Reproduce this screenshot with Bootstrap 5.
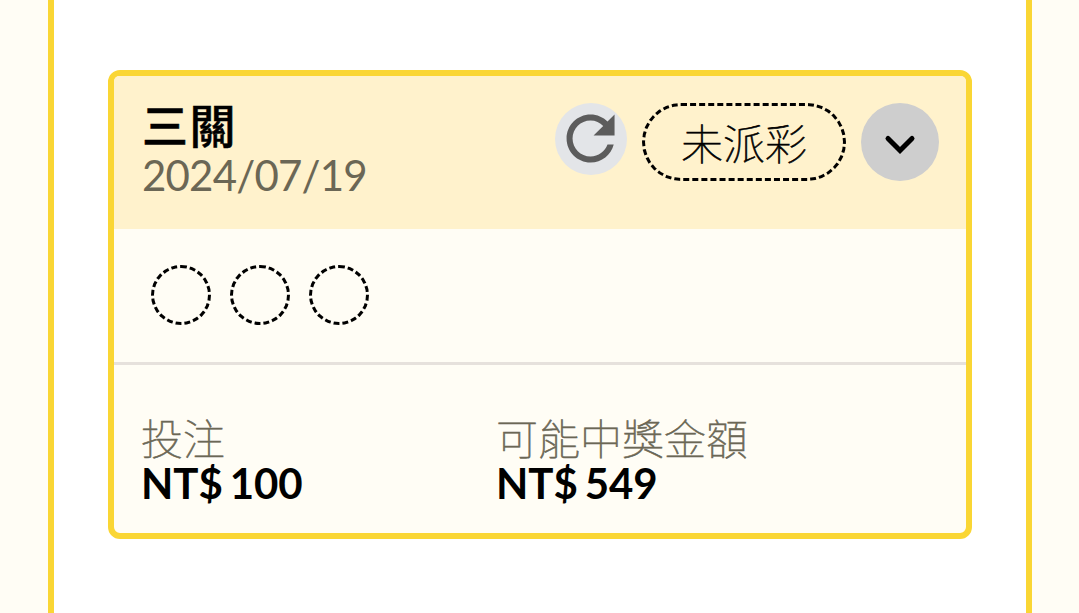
<!DOCTYPE html>
<html lang="zh-Hant">
<head>
  <meta charset="UTF-8">
  <meta name="viewport" content="width=device-width, initial-scale=1">
  <title>投注紀錄</title>
  <link href="https://cdn.jsdelivr.net/npm/bootstrap@5.3.0/dist/css/bootstrap.min.css" rel="stylesheet">
  <style>
    body {
      font-family: Lato, "Noto Sans CJK TC", sans-serif;
      font-size: 42px;
      line-height: 44px;
      color: #000;
      background-color: #fffdf5;
    }

    .history-panel {
      width: 984px;
      margin-left: 48px;
      padding: 70px 54px 0;
      background-color: #fff;
      border: solid #fad634;
      border-width: 0 6px;
    }

    .bet-card {
      height: 469px;
      color: #000;
      background-color: #fffdf5;
      border: 6px solid #fad634;
      border-radius: 12px;
    }

    .bet-header {
      height: 153px;
      padding: 25px 27px 0 28px;
      color: #000;
      background-color: #fff2cc;
      border: 0;
      border-radius: 6px 6px 0 0;
    }

    .bet-title {
      font-size: 46px;
      font-weight: 500;
      line-height: 50px;
      letter-spacing: 1.5px;
      -webkit-text-stroke: 0.5px currentColor;
    }

    .bet-date {
      padding-top: 2px;
      letter-spacing: -0.8px;
    }

    .bet-date,
    .bet-label {
      color: #6b6755;
    }

    .bet-label,
    .status-pill {
      font-weight: 100;
      -webkit-text-stroke: 0.6px currentColor;
    }

    .bet-actions {
      padding-top: 2px;
    }

    .btn-refresh {
      width: 72px;
      height: 72px;
      background-color: #e3e5e8;
    }

    .status-pill {
      width: 204px;
      height: 78px;
      margin: 0 15px;
      padding-top: 3px;
      border: 3px dashed #000;
    }

    .btn-toggle {
      width: 78px;
      height: 78px;
      background-color: #cecece;
    }

    .bet-legs {
      height: 136px;
      padding: 36px 37px 0;
      gap: 19px;
      border-bottom: 3px solid #e6e1dc;
    }

    .leg-circle {
      width: 60px;
      height: 60px;
      border: 3px dashed #000;
    }

    .bet-amounts {
      padding: 52px 27px 0;
    }

    .bet-stake {
      width: 355px;
    }

    .bet-value {
      font-weight: 700;
      word-spacing: -3.5px;
    }
  </style>
</head>

<body>
  <main class="history-panel min-vh-100">
    <div class="card bet-card">
      <div class="card-header bet-header d-flex justify-content-between align-items-start">
        <div>
          <div class="bet-title">三關</div>
          <div class="bet-date">2024/07/19</div>
        </div>
        <div class="bet-actions d-flex align-items-start">
          <button type="button" class="btn btn-refresh rounded-circle border-0 p-0 d-flex" aria-label="重新整理">
            <svg width="72" height="72" viewBox="0.15 0.15 24 24">
              <path d="M17.65 6.35C16.2 4.9 14.21 4 12 4c-4.42 0-7.99 3.58-7.99 8s3.57 8 7.99 8c3.73 0 6.84-2.55 7.73-6h-2.08c-.82 2.33-3.04 4-5.65 4-3.31 0-6-2.69-6-6s2.69-6 6-6c1.66 0 3.14.69 4.22 1.78L13 11h7V4l-2.35 2.35z" fill="#5c5c5c"/>
            </svg>
          </button>
          <div class="status-pill rounded-pill d-flex justify-content-center align-items-center">未派彩</div>
          <button type="button" class="btn btn-toggle rounded-circle border-0 p-0 d-flex" aria-label="展開">
            <svg width="78" height="78" viewBox="0 0 78 78">
              <path d="M27 35.500L39 47.500L51 35.500" fill="none" stroke="#000" stroke-width="5" stroke-linecap="round" stroke-linejoin="miter"/>
            </svg>
          </button>
        </div>
      </div>
      <div class="bet-legs d-flex">
        <span class="leg-circle rounded-circle"></span>
        <span class="leg-circle rounded-circle"></span>
        <span class="leg-circle rounded-circle"></span>
      </div>
      <div class="bet-amounts d-flex">
        <div class="bet-stake">
          <div class="bet-label">投注</div>
          <div class="bet-value">NT$ 100</div>
        </div>
        <div>
          <div class="bet-label">可能中獎金額</div>
          <div class="bet-value">NT$ 549</div>
        </div>
      </div>
    </div>
  </main>
  <script src="https://cdn.jsdelivr.net/npm/bootstrap@5.3.0/dist/js/bootstrap.bundle.min.js"></script>
</body>
</html>
